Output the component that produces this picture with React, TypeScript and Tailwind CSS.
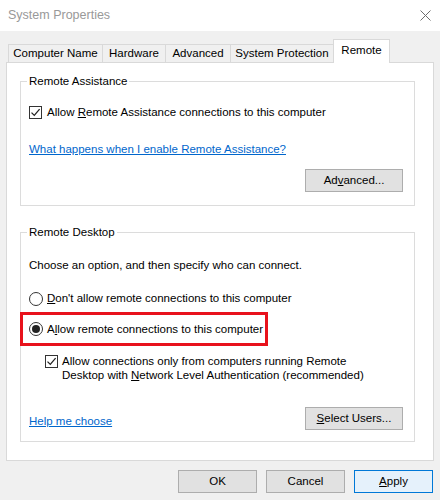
import React from 'react';

// --- small win32-style controls ---
const CheckBox = () => (
    <span className="inline-flex w-[13px] h-[13px] shrink-0 items-center justify-center border border-[#333333] bg-white">
        <svg width="11" height="11" viewBox="0 0 11 11" fill="none">
            <path d="M1.5 5.6 L4.3 8.4 L9.6 2.2" stroke="#222222" strokeWidth="1.3" />
        </svg>
    </span>
);

const Radio = ({ checked }: { checked?: boolean }) => (
    <span className="inline-flex w-[14px] h-[14px] shrink-0 items-center justify-center rounded-full border border-[#333333] bg-white">
        {checked && <span className="w-[8px] h-[8px] rounded-full bg-[#222222]" />}
    </span>
);

const Button = ({ children, primary, className = '' }: { children: React.ReactNode; primary?: boolean; className?: string }) => (
    <button
        className={`h-[23px] flex items-center justify-center border text-black ${
            primary ? 'bg-[#e5f1fb] border-[#0078d7]' : 'bg-[#e1e1e1] border-[#adadad]'
        } ${className}`}
    >
        {children}
    </button>
);

const tabs = [
    { label: 'Computer Name', w: 'w-[94px]' },
    { label: 'Hardware', w: 'w-[63px]' },
    { label: 'Advanced', w: 'w-[65px]' },
    { label: 'System Protection', w: 'w-[103px]' },
];

export default function App() {
    return (
        <div
            className="w-[440px] h-[500px] bg-[#f0f0f0] text-[11.5px] leading-[15px] text-black overflow-hidden"
            style={{ fontFamily: '"Liberation Sans", Arial, sans-serif' }}
        >
            {/* Title bar */}
            <div className="h-[31px] bg-white flex items-center justify-between pl-[8px] pr-[8px]">
                <span className="text-[12.5px] text-[#999999]">System Properties</span>
                <svg width="11" height="11" viewBox="0 0 11 11" className="mr-[1px]">
                    <path d="M0.5 0.5 L10.5 10.5 M10.5 0.5 L0.5 10.5" stroke="#6e6e6e" strokeWidth="1" />
                </svg>
            </div>

            {/* Tabs */}
            <div className="h-[32px] -mb-px flex items-end pl-[8px]">
                {tabs.map((t) => (
                    <div
                        key={t.label}
                        className={`${t.w} h-[18px] mb-px flex items-center justify-center border-t border-l border-[#d9d9d9] bg-[#f0f0f0]`}
                    >
                        {t.label}
                    </div>
                ))}
                <div className="relative z-10 w-[57px] h-[24px] flex justify-center pt-[3px] border-t border-l border-r border-[#d9d9d9] bg-white">
                    Remote
                </div>
            </div>

            {/* Tab page */}
            <div className="ml-[6px] w-[428px] h-[399px] border border-[#d9d9d9] bg-white pl-[13px]">
                {/* Remote Assistance */}
                <fieldset className="mt-[11px] w-[395px] border border-[#dcdcdc] pb-[13px]">
                    <legend className="ml-[6px] px-[2px] leading-[15px]">Remote Assistance</legend>
                    <div className="mt-[16px] ml-[8px] h-[15px] flex items-center gap-[5px]">
                        <CheckBox />
                        <span>
                            Allow <span className="underline">R</span>emote Assistance connections to this computer
                        </span>
                    </div>
                    <div className="mt-[22px] ml-[8px] h-[15px]">
                        <a className="text-[#0066cc] underline cursor-pointer">What happens when I enable Remote Assistance?</a>
                    </div>
                    <div className="mt-[12px] flex justify-end pr-[11px]">
                        <Button className="w-[98px]">
                            <span>
                                Ad<span className="underline">v</span>anced...
                            </span>
                        </Button>
                    </div>
                </fieldset>

                {/* Remote Desktop */}
                <fieldset className="mt-[19px] w-[395px] border border-[#dcdcdc] pb-[11px]">
                    <legend className="ml-[6px] px-[2px] leading-[15px]">Remote Desktop</legend>
                    <div className="mt-[18px] ml-[8px] h-[15px]">Choose an option, and then specify who can connect.</div>
                    <div className="mt-[18px] ml-[8px] h-[15px] flex items-center gap-[4px]">
                        <Radio />
                        <span>
                            <span className="underline">D</span>on't allow remote connections to this computer
                        </span>
                    </div>
                    <div className="mt-[6px] -ml-[1px] w-[248px] h-[34px] border-[3px] border-[#e8121c] flex items-center gap-[4px] pl-[6px]">
                        <Radio checked />
                        <span>
                            A<span className="underline">l</span>low remote connections to this computer
                        </span>
                    </div>
                    <div className="mt-[8px] ml-[24px] flex items-start gap-[4px]">
                        <span className="mt-[1px]">
                            <CheckBox />
                        </span>
                        <span className="leading-[14px]">
                            Allow connections only from computers running Remote
                            <br />
                            Desktop with <span className="underline">N</span>etwork Level Authentication (recommended)
                        </span>
                    </div>
                    <div className="mt-[25px] flex items-center justify-between pl-[8px] pr-[11px]">
                        <a className="mt-[5px] text-[#0066cc] underline cursor-pointer">Help me choose</a>
                        <Button className="w-[98px]">
                            <span>
                                <span className="underline">S</span>elect Users...
                            </span>
                        </Button>
                    </div>
                </fieldset>
            </div>

            {/* Dialog buttons */}
            <div className="mt-[9px] flex justify-end gap-[9px] pr-[7px]">
                <Button className="w-[79px]">OK</Button>
                <Button className="w-[79px]">Cancel</Button>
                <Button primary className="w-[79px]">
                    <span>
                        <span className="underline">A</span>pply
                    </span>
                </Button>
            </div>
        </div>
    );
}
